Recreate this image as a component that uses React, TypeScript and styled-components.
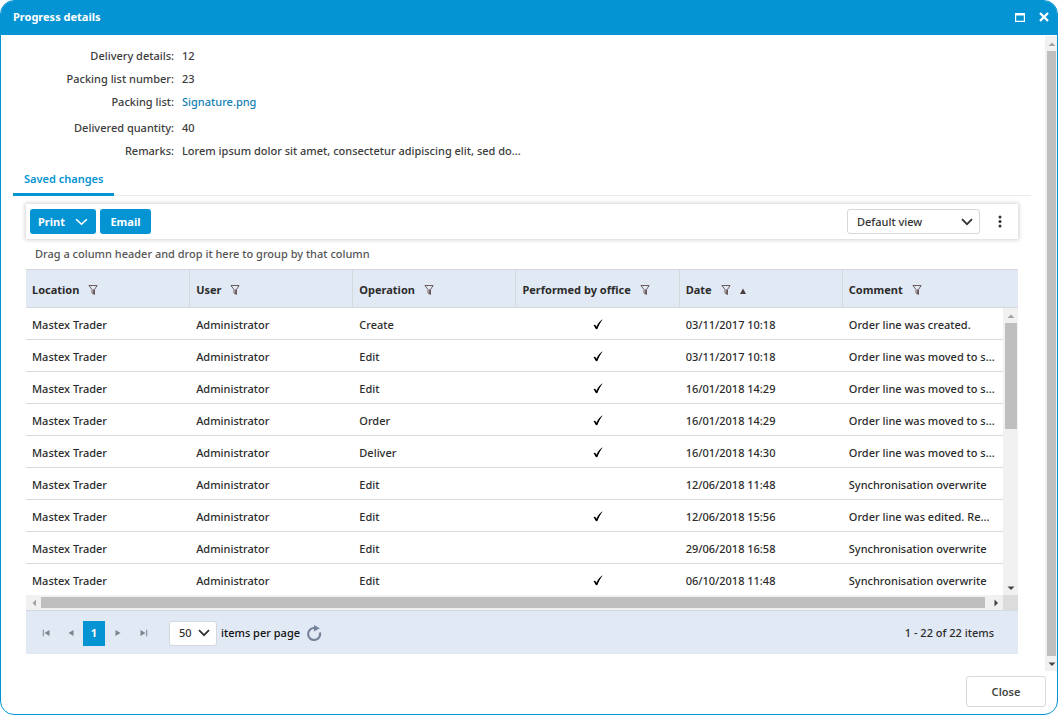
import React from "react";
import styled, { createGlobalStyle } from "styled-components";

const blue = "#0594d3";
const line = "#d5d8dc";
const paleBlue = "#e1e9f5";

const GlobalStyle = createGlobalStyle`
  *, *::before, *::after { box-sizing: border-box; }
  body {
    margin: 0;
    background: #fff;
    color: #2c2c2c;
    font-family: "Noto Sans", "Open Sans", sans-serif;
    font-size: 11px;
    font-weight: 500;
    line-height: 16px;
  }
  button, select { font: inherit; color: inherit; margin: 0; }
  svg { display: block; flex: none; }
`;

const Window = styled.section`
  display: flex;
  flex-direction: column;
  min-height: 100vh;
  border: 1px solid ${blue};
  border-radius: 14px;
  overflow: hidden;
  background: #fff;
`;

const TitleBar = styled.header`
  display: flex;
  align-items: center;
  justify-content: space-between;
  height: 34px;
  padding: 0 7px 2px 12px;
  background: ${blue};
  color: #fff;
`;

const Title = styled.h1`
  margin: 0;
  font-size: 11px;
  font-weight: 700;
`;

const WindowActions = styled.div`
  display: flex;
  gap: 12px;
`;

const IconButton = styled.button<{ $width: number; $color?: string }>`
  display: flex;
  align-items: center;
  justify-content: center;
  width: ${(p) => p.$width}px;
  height: 24px;
  padding: 0;
  border: 0;
  background: none;
  color: ${(p) => p.$color ?? "inherit"};
`;

const Body = styled.div`
  display: flex;
  padding-top: 1px;
`;

const Content = styled.div`
  flex: 1;
  min-width: 0;
  padding: 9px 14px 17px 12px;
`;

const Details = styled.dl`
  margin: 0;
  color: #3c3c3c;
`;

const Detail = styled.div<{ $tall?: boolean }>`
  display: grid;
  grid-template-columns: 161px 1fr;
  column-gap: 8px;
  height: ${(p) => (p.$tall ? 26 : 23)}px;
  padding-top: 3px;
`;

const Term = styled.dt`
  text-align: right;
`;

const Value = styled.dd`
  margin: 0;
`;

const FileLink = styled.a`
  color: #147fb3;
  text-decoration: none;
`;

const Tabs = styled.div`
  display: flex;
  height: 33px;
  border-bottom: 1px solid #ebebeb;
`;

const Tab = styled.button`
  height: 33px;
  padding: 2px 11px 0;
  border: 0;
  border-bottom: 3px solid ${blue};
  background: none;
  color: ${blue};
  font-weight: 600;
`;

const Panel = styled.div`
  padding: 8px 13px 0 13px;
`;

const Toolbar = styled.div`
  display: flex;
  align-items: center;
  gap: 4px;
  height: 35px;
  padding: 0 10px 0 4px;
  background: #fff;
  box-shadow: 0 0 4px 1px rgba(0, 0, 0, 0.18);
`;

const PrimaryButton = styled.button`
  display: flex;
  align-items: center;
  justify-content: center;
  gap: 10px;
  min-width: 51px;
  height: 25px;
  padding: 0 8px;
  border: 0;
  border-radius: 3px;
  background: ${blue};
  color: #fff;
  font-weight: 700;
`;

const ToolbarEnd = styled.div`
  display: flex;
  align-items: center;
  gap: 12px;
  margin-left: auto;
`;

const SelectBox = styled.div<{ $width: number }>`
  display: grid;
  align-items: center;
  width: ${(p) => p.$width}px;
  height: 25px;
  border: 1px solid ${line};
  border-radius: 3px;
  background: #fff;
  color: #333;

  > * { grid-area: 1 / 1; }
  > svg {
    justify-self: end;
    margin-right: 6px;
    pointer-events: none;
  }
`;

const Select = styled.select`
  appearance: none;
  width: 100%;
  height: 100%;
  padding: 0 20px 0 9px;
  border: 0;
  background: transparent;
`;

const GroupHint = styled.p`
  margin: 0;
  padding: 7px 9px;
  color: #555;
`;

const GridHead = styled.div`
  padding-right: 15px;
  border-top: 1px solid ${line};
  border-bottom: 1px solid ${line};
  background: ${paleBlue};
`;

const Table = styled.table`
  width: 100%;
  table-layout: fixed;
  border-collapse: separate;
  border-spacing: 0;
`;

const HeadCell = styled.th`
  height: 37px;
  padding: 2px 0 0 6px;
  border-left: 1px solid ${line};
  text-align: left;
  font-weight: 700;
  white-space: nowrap;

  &:first-child { border-left: 0; }
`;

const HeadLabel = styled.div`
  display: flex;
  align-items: center;
  gap: 9px;
`;

const GridViewport = styled.div`
  display: grid;
  grid-template-columns: minmax(0, 1fr) 15px;
`;

const Rows = styled.div`
  height: 287px;
  overflow: hidden;
`;

const Cell = styled.td`
  height: 32px;
  padding: 2px 5px 0 7px;
  border-bottom: 1px solid #d9d9d9;
  white-space: nowrap;

  &:first-child { padding-left: 6px; }
  > svg { margin: 0 auto; }
`;

const ScrollTrack = styled.div<{ $horizontal?: boolean; $size: number }>`
  display: flex;
  flex: none;
  flex-direction: ${(p) => (p.$horizontal ? "row" : "column")};
  ${(p) => (p.$horizontal ? "height" : "width")}: ${(p) => p.$size}px;
  padding: ${(p) => (p.$horizontal ? "2px 0" : "0 1px 0 2px")};
  background: #f1f1f1;
`;

const ScrollArrow = styled.div`
  display: flex;
  flex: 0 0 15px;
  align-items: center;
  justify-content: center;
`;

const ScrollThumb = styled.div<{ $share: number }>`
  flex: ${(p) => p.$share} 0 0;
  background: #bfbfbf;
`;

const ScrollRest = styled.div<{ $share: number }>`
  flex: ${(p) => p.$share} 0 0;
`;

const ScrollCorner = styled.div`
  background: #dcdcdc;
`;

const Pager = styled.nav`
  display: flex;
  align-items: center;
  height: 44px;
  padding: 1px 24px 0 8px;
  border-top: 1px solid ${line};
  background: ${paleBlue};
`;

const CurrentPage = styled.button`
  width: 22px;
  height: 25px;
  padding: 0;
  border: 0;
  background: ${blue};
  color: #fff;
  font-weight: 700;
`;

const PageSize = styled.div`
  display: flex;
  align-items: center;
  gap: 4px;
  margin-left: 13px;
`;

const PageSizeLabel = styled.label`
  color: #111;
`;

const PagerInfo = styled.span`
  margin-left: auto;
`;

const Footer = styled.footer`
  display: flex;
  flex: 1;
  align-items: flex-start;
  justify-content: flex-end;
  padding: 5px 11px 7px;
`;

const CloseButton = styled.button`
  width: 80px;
  height: 31px;
  border: 1px solid ${line};
  border-radius: 3px;
  background: #fff;
  color: #444;
  font-weight: 600;
`;

const Chevron = ({ width = 12, weight = 1.8 }: { width?: number; weight?: number }) => (
  <svg width={width} height="8" viewBox="0 0 12 8" fill="none" stroke="currentColor" strokeWidth={weight} preserveAspectRatio="none">
    <path d="M1 1.2 6 6.2 11 1.2" />
  </svg>
);

const FilterIcon = () => (
  <svg width="10" height="12" viewBox="0 0 10 12" fill="none" stroke="#6b5a5a">
    <path d="M.9 1.500h8.200L6.500 5.500v5L4 9V5.500z" />
    <path d="M5.600 5.500v4.500" />
  </svg>
);

const Check = () => (
  <svg width="10" height="11" viewBox="0 0 10 11" fill="#000">
    <path d="M.6 6.3c.4-.8 1.6-.9 2.1.1l.7 1.4C4.600 5 6.600 2 9.200.4l.3.3C7.400 3.200 5.800 6.300 4.500 9.700c-.3.700-1.500.800-1.800.100z" />
  </svg>
);

type Direction = "up" | "down" | "left" | "right";
const trianglePaths: Record<Direction, string> = {
  up: "M.5 6h7L4 2.500z",
  down: "M.5 2.500h7L4 6z",
  left: "M6 .5v7L2.500 4z",
  right: "M2.500 .5v7L6 4z",
};

const Triangle = ({ to, color = "#444" }: { to: Direction; color?: string }) => (
  <svg width="8" height="8" viewBox="0 0 8 8" fill={color}>
    <path d={trianglePaths[to]} />
  </svg>
);

const PagerArrow = ({ back, end }: { back?: boolean; end?: boolean }) => (
  <svg width="8" height="8" viewBox="0 0 8 8" fill="#7f848c" transform={back ? "scale(-1 1)" : undefined}>
    <path d={end ? "M.5 1v6l5-3z" : "M1.500 1v6l5-3z"} />
    {end && <path d="M6.200.8h1v6.400h-1z" />}
  </svg>
);

const SortIcon = () => (
  <svg width="6" height="12" viewBox="0 0 6 12" fill="#4a3f3f">
    <path d="M0 10h6L3 4.500z" />
  </svg>
);

const RefreshIcon = () => (
  <svg width="16" height="16" viewBox="0 0 16 16" fill="none">
    <path d="M13.900 7.500A6 6 0 1 1 8.500 3" stroke="#75849a" strokeWidth="2.200" />
    <path d="M8 0 13.800 3.200 8 6.400z" fill="#75849a" />
  </svg>
);

const details = [
  { term: "Delivery details:", value: "12" },
  { term: "Packing list number:", value: "23" },
  { term: "Packing list:", value: "Signature.png", link: true },
  { term: "Delivered quantity:", value: "40" },
  { term: "Remarks:", value: "Lorem ipsum dolor sit amet, consectetur adipiscing elit, sed do..." },
];

const columns = ["Location", "User", "Operation", "Performed by office", "Date", "Comment"];

const changes: [string, boolean, string, string][] = [
  ["Create", true, "03/11/2017 10:18", "Order line was created."],
  ["Edit", true, "03/11/2017 10:18", "Order line was moved to s..."],
  ["Edit", true, "16/01/2018 14:29", "Order line was moved to s..."],
  ["Order", true, "16/01/2018 14:29", "Order line was moved to s..."],
  ["Deliver", true, "16/01/2018 14:30", "Order line was moved to s..."],
  ["Edit", false, "12/06/2018 11:48", "Synchronisation overwrite"],
  ["Edit", true, "12/06/2018 15:56", "Order line was edited. Re..."],
  ["Edit", false, "29/06/2018 16:58", "Synchronisation overwrite"],
  ["Edit", true, "06/10/2018 11:48", "Synchronisation overwrite"],
];

const ColumnWidth = styled.col`
  width: 16.7%;
  &:last-child { width: auto; }
`;

const ColumnWidths = () => (
  <colgroup>
    {columns.map((name) => <ColumnWidth key={name} />)}
  </colgroup>
);

export default function App() {
  return (
    <>
      <GlobalStyle />
      <Window aria-label="Progress details">
        <TitleBar>
          <Title>Progress details</Title>
          <WindowActions>
            <IconButton $width={12} aria-label="Maximize">
              <svg width="10" height="9" viewBox="0 0 10 9" fill="none" stroke="#fff">
                <path d="M.6.5v7.900h8.800V.5" strokeWidth="1.200" />
                <path d="M0 1.300h10" strokeWidth="2.600" />
              </svg>
            </IconButton>
            <IconButton $width={12} aria-label="Close window">
              <svg width="10" height="10" viewBox="0 0 10 10" fill="none" stroke="#fff" strokeWidth="2.300">
                <path d="M1 1l8 8M9 1 1 9" />
              </svg>
            </IconButton>
          </WindowActions>
        </TitleBar>

        <Body>
          <Content>
            <Details>
              {details.map((d) => (
                <Detail key={d.term} $tall={d.link}>
                  <Term>{d.term}</Term>
                  <Value>{d.link ? <FileLink href="#signature">{d.value}</FileLink> : d.value}</Value>
                </Detail>
              ))}
            </Details>

            <Tabs role="tablist">
              <Tab role="tab" aria-selected="true">Saved changes</Tab>
            </Tabs>

            <Panel role="tabpanel">
              <Toolbar>
                <PrimaryButton>
                  Print
                  <Chevron width={13} weight={1.5} />
                </PrimaryButton>
                <PrimaryButton>Email</PrimaryButton>
                <ToolbarEnd>
                  <SelectBox $width={133}>
                    <Select aria-label="View">
                      <option>Default view</option>
                    </Select>
                    <Chevron />
                  </SelectBox>
                  <IconButton $width={16} $color="#333" aria-label="More options">
                    <svg width="4" height="13" viewBox="0 0 4 13" fill="currentColor">
                      <circle cx="2" cy="2" r="1.500" />
                      <circle cx="2" cy="6.500" r="1.500" />
                      <circle cx="2" cy="11" r="1.500" />
                    </svg>
                  </IconButton>
                </ToolbarEnd>
              </Toolbar>

              <GroupHint>Drag a column header and drop it here to group by that column</GroupHint>

              <GridHead>
                <Table>
                  <ColumnWidths />
                  <thead>
                    <tr>
                      {columns.map((name) => (
                        <HeadCell key={name}>
                          <HeadLabel>
                            {name}
                            <FilterIcon />
                            {name === "Date" && <SortIcon />}
                          </HeadLabel>
                        </HeadCell>
                      ))}
                    </tr>
                  </thead>
                </Table>
              </GridHead>

              <GridViewport>
                <Rows>
                  <Table>
                    <ColumnWidths />
                    <tbody>
                      {changes.map(([operation, office, date, comment], i) => (
                        <tr key={i}>
                          <Cell>Mastex Trader</Cell>
                          <Cell>Administrator</Cell>
                          <Cell>{operation}</Cell>
                          <Cell>{office && <Check />}</Cell>
                          <Cell>{date}</Cell>
                          <Cell>{comment}</Cell>
                        </tr>
                      ))}
                    </tbody>
                  </Table>
                </Rows>
                <ScrollTrack $size={15}>
                  <ScrollArrow><Triangle to="up" color="#a3a3a3" /></ScrollArrow>
                  <ScrollThumb $share={106} />
                  <ScrollRest $share={151} />
                  <ScrollArrow><Triangle to="down" /></ScrollArrow>
                </ScrollTrack>
                <ScrollTrack $horizontal $size={15}>
                  <ScrollArrow><Triangle to="left" color="#a3a3a3" /></ScrollArrow>
                  <ScrollThumb $share={944} />
                  <ScrollRest $share={3} />
                  <ScrollArrow><Triangle to="right" /></ScrollArrow>
                </ScrollTrack>
                <ScrollCorner />
              </GridViewport>

              <Pager aria-label="Pages">
                <IconButton $width={24} aria-label="First page"><PagerArrow back end /></IconButton>
                <IconButton $width={25} aria-label="Previous page"><PagerArrow back /></IconButton>
                <CurrentPage aria-current="page">1</CurrentPage>
                <IconButton $width={26} aria-label="Next page"><PagerArrow /></IconButton>
                <IconButton $width={25} aria-label="Last page"><PagerArrow end /></IconButton>
                <PageSize>
                  <SelectBox $width={48}>
                    <Select id="page-size">
                      <option>50</option>
                    </Select>
                    <Chevron />
                  </SelectBox>
                  <PageSizeLabel htmlFor="page-size">items per page</PageSizeLabel>
                  <IconButton $width={20} aria-label="Refresh"><RefreshIcon /></IconButton>
                </PageSize>
                <PagerInfo>1 - 22 of 22 items</PagerInfo>
              </Pager>
            </Panel>
          </Content>

          <ScrollTrack $size={12}>
            <ScrollArrow><Triangle to="up" color="#a3a3a3" /></ScrollArrow>
            <ScrollThumb $share={1} />
            <ScrollArrow><Triangle to="down" /></ScrollArrow>
          </ScrollTrack>
        </Body>

        <Footer>
          <CloseButton>Close</CloseButton>
        </Footer>
      </Window>
    </>
  );
}
